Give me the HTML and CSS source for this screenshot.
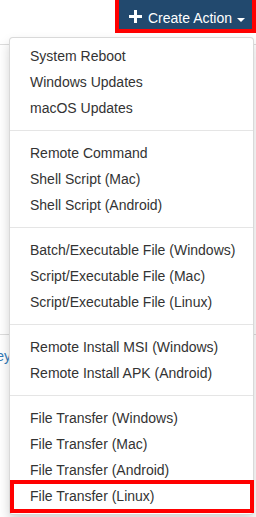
FILE: index.html
```html
<!DOCTYPE html>
<html lang="en">
<head>
<meta charset="utf-8">
<title>Create Action</title>
<link rel="stylesheet" href="styles.css">
</head>
<body>
<div class="page">
  <div class="toolbar">
    <button class="btn-create" type="button">
      <svg class="icon-plus" width="13" height="13" viewBox="0 0 13 13" aria-hidden="true">
        <rect x="5" y="0" width="3" height="13" fill="#fff"/>
        <rect x="0" y="5" width="13" height="3" fill="#fff"/>
      </svg>
      <span class="btn-label">Create Action</span>
      <span class="caret"></span>
    </button>
  </div>

  <div class="content">
    <div class="rule"></div>
    <div class="spacer"></div>
    <div class="rule"></div>
    <div class="row"><a class="link" href="#">Key</a></div>
  </div>

  <ul class="dropdown-menu">
    <li><a href="#">System Reboot</a></li>
    <li><a href="#">Windows Updates</a></li>
    <li><a href="#">macOS Updates</a></li>
    <li class="divider"></li>
    <li><a href="#">Remote Command</a></li>
    <li><a href="#">Shell Script (Mac)</a></li>
    <li><a href="#">Shell Script (Android)</a></li>
    <li class="divider"></li>
    <li><a href="#">Batch/Executable File (Windows)</a></li>
    <li><a href="#">Script/Executable File (Mac)</a></li>
    <li><a href="#">Script/Executable File (Linux)</a></li>
    <li class="divider"></li>
    <li><a href="#">Remote Install MSI (Windows)</a></li>
    <li><a href="#">Remote Install APK (Android)</a></li>
    <li class="divider"></li>
    <li><a href="#">File Transfer (Windows)</a></li>
    <li><a href="#">File Transfer (Mac)</a></li>
    <li><a href="#">File Transfer (Android)</a></li>
    <li class="highlight"><a href="#">File Transfer (Linux)</a></li>
  </ul>
</div>
</body>
</html>
```

FILE: styles.css
```css
html, body {
  margin: 0;
  padding: 0;
  background: #fff;
}

body {
  font-family: "Liberation Sans", Arial, Helvetica, sans-serif;
  font-size: 14px;
  line-height: 20px;
  color: #333;
}

.page {
  position: relative;
  width: 256px;
  height: 517px;
  overflow: hidden;
}

.toolbar {
  display: flex;
  justify-content: flex-end;
  padding-right: 4px;
}

.btn-create {
  display: flex;
  align-items: center;
  box-sizing: border-box;
  width: 133px;
  height: 29px;
  padding: 8px 8px 1px 10px;
  margin: 0;
  border: 0;
  background: #22496e;
  color: #fff;
  font-family: "Liberation Sans", Arial, Helvetica, sans-serif;
  font-size: 14px;
  line-height: 20px;
  outline: 4px solid #ff0000;
  cursor: pointer;
}

.icon-plus {
  display: block;
  flex: none;
  margin-bottom: 3px;
}

.btn-label {
  margin-left: 6px;
  white-space: nowrap;
}

.caret {
  display: block;
  flex: none;
  width: 0;
  height: 0;
  margin-left: 5px;
  margin-top: 4px;
  border-top: 4px solid #fff;
  border-left: 4px solid transparent;
  border-right: 4px solid transparent;
}

.content {
  padding-top: 15px;
}

.rule {
  height: 1px;
  background: #ddd;
}

.spacer {
  height: 289px;
}

.row {
  padding-top: 11px;
  margin-left: -13px;
  white-space: nowrap;
}

.link {
  color: #337ab7;
  text-decoration: none;
}

.dropdown-menu {
  position: absolute;
  top: 37px;
  left: 9px;
  width: 245px;
  box-sizing: border-box;
  margin: 0;
  padding: 5px 0;
  list-style: none;
  background: #fff;
  border: 1px solid rgba(0, 0, 0, 0.15);
  border-radius: 4px;
  box-shadow: 0 6px 12px rgba(0, 0, 0, 0.175);
}

.dropdown-menu li a {
  display: block;
  padding: 3px 20px;
  line-height: 20px;
  color: #333;
  text-decoration: none;
  white-space: nowrap;
}

.dropdown-menu .divider {
  height: 1px;
  margin: 9px 0;
  background: #e5e5e5;
}

.dropdown-menu .highlight {
  position: relative;
}

.dropdown-menu .highlight::after {
  content: "";
  position: absolute;
  top: -3px;
  bottom: -4px;
  left: 0;
  right: -1px;
  border: 4px solid #ff0000;
  pointer-events: none;
}
```
